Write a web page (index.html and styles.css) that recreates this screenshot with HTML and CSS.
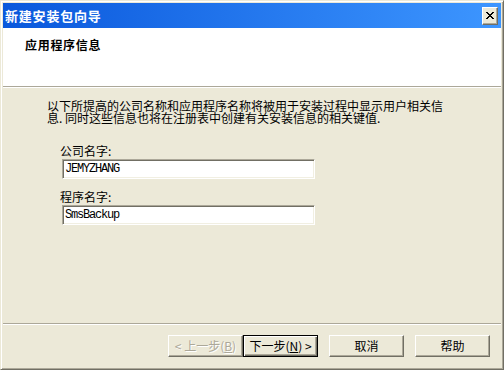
FILE: index.html
```html
<!DOCTYPE html>
<html lang="zh-CN">
<head>
    <meta charset="UTF-8">
    <title>新建安装包向导</title>
    <link rel="stylesheet" href="styles.css">
</head>
<body>
    <div class="window">
        <div class="titlebar">
            <span class="title">新建安装包向导</span>
            <button class="close-btn">
                <svg width="8" height="7" viewBox="0 0 8 7" shape-rendering="crispEdges">
                    <path fill="#000" d="M0 0h2v1h-2zM6 0h2v1h-2zM1 1h2v1h-2zM5 1h2v1h-2zM2 2h4v1h-4zM3 3h2v1h-2zM2 4h4v1h-4zM1 5h2v1h-2zM5 5h2v1h-2zM0 6h2v1h-2zM6 6h2v1h-2z"/>
                </svg>
            </button>
        </div>

        <div class="header">
            <h1 class="header-title">应用程序信息</h1>
        </div>

        <div class="content">
            <p class="intro">以下所提高的公司名称和应用程序名称将被用于安装过程中显示用户相关信<br>息. 同时这些信息也将在注册表中创建有关安装信息的相关键值.</p>

            <div class="field">
                <label>公司名字:</label>
                <input type="text" value="JEMYZHANG">
            </div>

            <div class="field">
                <label>程序名字:</label>
                <input type="text" value="SmsBackup">
            </div>
        </div>

        <div class="footer">
            <button class="btn" disabled>&lt; 上一步(<u>B</u>)</button>
            <button class="btn btn-default">下一步(<u>N</u>) &gt;</button>
            <button class="btn btn-gap">取消</button>
            <button class="btn btn-gap">帮助</button>
        </div>
    </div>
</body>
</html>
```

FILE: styles.css
```css
body {
    margin: 0;
    background-color: #ece9d8;
    font-family: "Noto Sans CJK SC", "Liberation Sans", sans-serif;
    font-size: 12px;
    color: #000;
}

.window {
    width: 504px;
    height: 370px;
    box-sizing: border-box;
    display: flex;
    flex-direction: column;
    background: #ece9d8;
    border: 1px solid;
    border-color: #ece9d8 #716f64 #716f64 #ece9d8;
    padding: 2px;
    box-shadow: inset 1px 1px #fff, inset -1px -1px #aca899;
}

.titlebar {
    height: 25px;
    flex-shrink: 0;
    display: flex;
    align-items: center;
    justify-content: space-between;
    padding: 0 3px 0 2px;
    background: linear-gradient(to right, #0a58dc, #3d96ff);
}

.title {
    color: #fff;
    font-size: 13px;
    font-weight: bold;
    line-height: 14px;
    letter-spacing: 0.8px;
}

.close-btn {
    width: 16px;
    height: 18px;
    padding: 0;
    display: flex;
    align-items: center;
    justify-content: center;
    background: #ece9d8;
    border: 1px solid;
    border-color: #fff #716f64 #716f64 #fff;
    box-shadow: inset -1px -1px #aca899;
}

.header {
    height: 59px;
    flex-shrink: 0;
    background: #fff;
    border-bottom: 1px solid #aca899;
    box-shadow: 0 1px #fff;
    padding: 10px 0 0 22px;
    box-sizing: border-box;
}

.header-title {
    margin: 0;
    font-size: 12px;
    font-weight: bold;
    line-height: 14px;
    letter-spacing: 0.7px;
}

.content {
    flex: 1;
    padding: 13px 0 0 44px;
}

.intro {
    margin: 0;
    line-height: 12px;
}

.field {
    margin: 20px 0 0 13px;
}

.field + .field {
    margin-top: 11px;
}

.field label {
    display: block;
    line-height: 13px;
    margin-bottom: 2px;
}

.field input {
    display: block;
    width: 253px;
    height: 20px;
    box-sizing: border-box;
    margin: 0 0 0 2px;
    padding: 0 0 0 2px;
    background: #fff;
    border: 1px solid;
    border-color: #aca899 #fff #fff #aca899;
    box-shadow: inset 1px 1px #716f64, inset -1px -1px #f1efe2;
    font-family: "Liberation Mono", monospace;
    font-size: 12px;
    letter-spacing: -1.2px;
    color: #000;
    outline: none;
}

.footer {
    height: 44px;
    flex-shrink: 0;
    box-sizing: border-box;
    display: flex;
    justify-content: flex-end;
    align-items: flex-start;
    padding: 11px 11px 0 0;
    border-top: 1px solid #aca899;
    box-shadow: inset 0 1px #fff;
}

.btn {
    width: 75px;
    height: 22px;
    padding: 0;
    background: #ece9d8;
    border: 1px solid;
    border-color: #fff #716f64 #716f64 #fff;
    box-shadow: inset -1px -1px #aca899;
    font-family: "Noto Sans CJK SC", "Liberation Sans", sans-serif;
    font-size: 12px;
    line-height: 14px;
    color: #000;
}

.btn:disabled {
    color: #aca899;
    text-shadow: 1px 1px #fff;
}

.btn-default {
    border-color: #000;
    box-shadow: inset 1px 1px #fff, inset -1px -1px #716f64, inset -2px -2px #aca899;
}

.btn-gap {
    margin-left: 11px;
}
```
